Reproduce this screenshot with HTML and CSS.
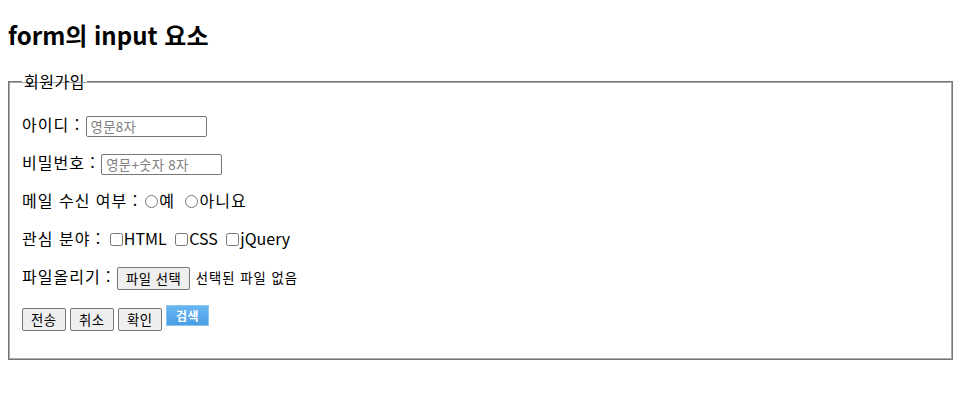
FILE: index.html
```html
<!DOCTYPE html>
<html lang="ko">
<head>
<meta charset="utf-8">
<title>form의 input 요소</title>
<link rel="stylesheet" href="styles.css">
</head>
<body>
<h2 class="title">form의 input 요소</h2>
<form class="form">
  <fieldset class="box">
    <legend class="legend">회원가입</legend>
    <p class="row">아이디 : <input class="text" type="text" placeholder="영문8자"></p>
    <p class="row">비밀번호 : <input class="text" type="password" placeholder="영문+숫자 8자"></p>
    <p class="row">메일 수신 여부 :<input class="radio" type="radio" name="mail" id="y"><label for="y">예</label> <input class="radio" type="radio" name="mail" id="n"><label for="n">아니요</label></p>
    <p class="row">관심 분야 : <input class="check" type="checkbox" id="c1"><label class="en" for="c1">HTML</label> <input class="check" type="checkbox" id="c2"><label class="en" for="c2">CSS</label> <input class="check" type="checkbox" id="c3"><label class="en" for="c3">jQuery</label></p>
    <p class="row">파일올리기 : <button type="button" class="btn">파일 선택</button> <span class="file-name">선택된 파일 없음</span></p>
    <p class="row buttons"><button type="submit" class="btn">전송</button> <button type="reset" class="btn">취소</button> <button type="button" class="btn">확인</button> <button type="button" class="search">검색</button></p>
  </fieldset>
</form>
</body>
</html>
```
FILE: styles.css
```css
body {
  margin: 8px;
  font-family: "Noto Sans CJK KR", "Noto Sans", sans-serif;
  font-size: 16px;
  color: #000;
  background: #fff;
}
.title {
  font-size: 24px;
  font-weight: 700;
  line-height: 32px;
  margin: 11px 0 19px;
}
.form {
  margin: 0;
}
.box {
  margin: 0;
  border: 1px solid #767676;
  box-shadow: inset 0 0 0 1px #a9a9a9;
  padding: 5px 13px 16px;
}
.legend {
  padding: 0 2px;
  font-size: 16px;
  line-height: 22px;
  letter-spacing: 0.5px;
}
.row {
  margin: 16px 0;
  line-height: 22px;
  height: 22px;
  letter-spacing: 1px;
}
.en {
  letter-spacing: 0;
}
.text {
  box-sizing: border-box;
  width: 121px;
  height: 21px;
  margin: 0;
  padding: 1px 4px;
  border: 1px solid #767676;
  border-radius: 2px;
  font-family: "Noto Sans CJK KR", sans-serif;
  font-size: 13.33px;
  letter-spacing: 0.3px;
  vertical-align: middle;
}
.text::placeholder {
  color: #808080;
}
.radio {
  width: 13px;
  height: 13px;
  margin: 0 1px 0 7px;
  vertical-align: -1px;
}
.radio + label + .radio {
  margin-left: 5px;
}
.check {
  width: 13px;
  height: 13px;
  margin: 0 1px 0 3px;
  vertical-align: -1px;
}
.file-name {
  font-size: 13.33px;
  letter-spacing: 1px;
}
.btn {
  font-family: "Noto Sans CJK KR", sans-serif;
  font-size: 13.33px;
  line-height: 17px;
  height: 23px;
  padding: 1px 8px;
  margin: 0;
  background: #efefef;
  border: 1px solid #767676;
  border-radius: 2px;
  color: #000;
  letter-spacing: 0.5px;
  vertical-align: middle;
}
.buttons {
  margin-top: 18px;
  letter-spacing: 0;
}
.search {
  box-sizing: border-box;
  width: 43px;
  height: 21px;
  margin: 0;
  padding: 0;
  border: 1px solid #8cc4f0;
  background: linear-gradient(#6ab6f2, #4a9de4);
  color: #fff;
  font-family: "Noto Sans CJK KR", sans-serif;
  font-size: 12px;
  font-weight: 700;
  line-height: 17px;
  letter-spacing: 0.5px;
  vertical-align: 3px;
}
```
